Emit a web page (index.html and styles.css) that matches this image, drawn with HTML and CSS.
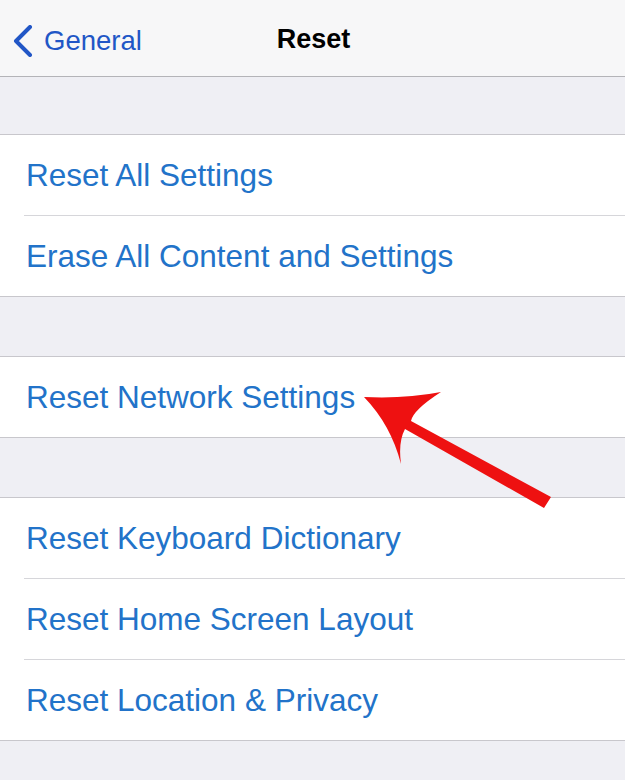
FILE: index.html
```html
<!DOCTYPE html>
<html lang="en">
<head>
    <meta charset="UTF-8">
    <meta name="viewport" content="width=device-width, initial-scale=1.0">
    <title>Reset</title>
    <link rel="stylesheet" href="styles.css">
</head>
<body>
    <div class="navbar">
        <a class="back">
            <svg class="chevron" width="22" height="32" viewBox="0 0 22 32">
                <path d="M18 2 L4 16 L18 30" fill="none" stroke="#2156c6" stroke-width="4" stroke-linecap="round" stroke-linejoin="round"/>
            </svg>
            <span>General</span>
        </a>
        <div class="title">Reset</div>
    </div>

    <div class="gap first"></div>
    <div class="group">
        <div class="row">Reset All Settings</div>
        <div class="row">Erase All Content and Settings</div>
    </div>

    <div class="gap"></div>
    <div class="group">
        <div class="row">Reset Network Settings</div>
    </div>

    <div class="gap"></div>
    <div class="group">
        <div class="row">Reset Keyboard Dictionary</div>
        <div class="row">Reset Home Screen Layout</div>
        <div class="row">Reset Location &amp; Privacy</div>
    </div>

    <!-- red pointer over the network row -->
    <svg class="arrow" width="625" height="780" viewBox="0 0 625 780">
        <path d="M364 397 Q405 399 441 392 Q413 410 411 421 L551 497 L544 508 L405 429 Q398 442 401 464 Q391 425 364 397 Z" fill="#ee1111"/>
    </svg>
</body>
</html>
```

FILE: styles.css
```css
body {
    margin: 0;
    background: #efeff4;
    font-family: "Liberation Sans", Arial, sans-serif;
    position: relative;
    height: 780px;
    overflow: hidden;
}
.navbar {
    height: 76px;
    background: #f7f7f8;
    border-bottom: 1px solid #b4b4b8;
    display: flex;
    align-items: center;
    justify-content: center;
    position: relative;
}
.back {
    position: absolute;
    left: 12px;
    top: 25px;
    display: flex;
    align-items: center;
    gap: 10px;
    color: #2156c6;
    font-size: 27.5px;
}
.title {
    font-size: 27px;
    font-weight: bold;
    color: #000;
    margin-left: 2px;
    padding-top: 3px;
}
.gap {
    height: 59px;
}
.gap.first {
    height: 57px;
}
.group {
    background: #fff;
    border-top: 1px solid #c8c7cc;
    border-bottom: 1px solid #c8c7cc;
    padding-left: 24px;
}
.row {
    height: 80px;
    line-height: 80px;
    font-size: 31.5px;
    color: #2273c9;
    padding-left: 2px;
    border-bottom: 1px solid #d6d6da;
}
.row:last-child {
    border-bottom: none;
}
.arrow {
    position: absolute;
    left: 0;
    top: 0;
}
```
